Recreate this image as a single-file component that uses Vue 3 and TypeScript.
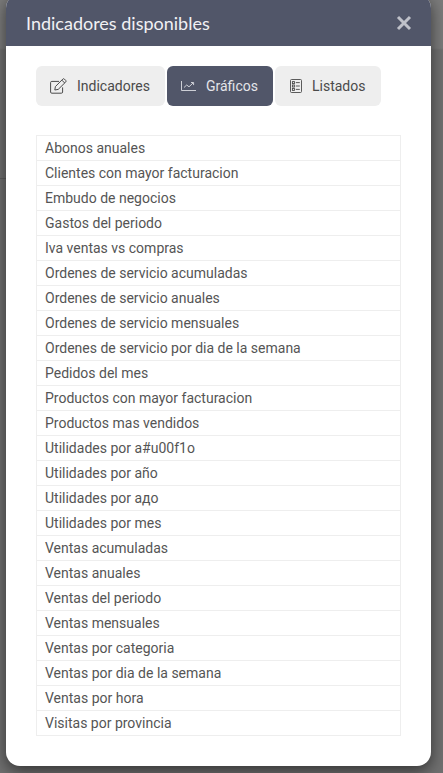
<script setup lang="ts">
const items: string[] = [
  'Abonos anuales',
  'Clientes con mayor facturacion',
  'Embudo de negocios',
  'Gastos del periodo',
  'Iva ventas vs compras',
  'Ordenes de servicio acumuladas',
  'Ordenes de servicio anuales',
  'Ordenes de servicio mensuales',
  'Ordenes de servicio por dia de la semana',
  'Pedidos del mes',
  'Productos con mayor facturacion',
  'Productos mas vendidos',
  'Utilidades por a#u00f1o',
  'Utilidades por año',
  'Utilidades por адо',
  'Utilidades por mes',
  'Ventas acumuladas',
  'Ventas anuales',
  'Ventas del periodo',
  'Ventas mensuales',
  'Ventas por categoria',
  'Ventas por dia de la semana',
  'Ventas por hora',
  'Visitas por provincia',
]
</script>

<template>
  <div class="backdrop">
    <div class="modal">
      <header class="head">
        <h1 class="title">Indicadores disponibles</h1>
        <svg class="close" viewBox="0 0 16 16" width="16" height="16" aria-hidden="true">
          <path d="M2 2 L14 14 M14 2 L2 14" fill="none" stroke="currentColor" stroke-width="3" />
        </svg>
      </header>
      <div class="body">
        <nav class="tabs">
          <button class="tab tab-a">
            <svg class="icon" viewBox="0 0 17 16" width="17" height="16" fill="none" stroke="currentColor" stroke-width="1" aria-hidden="true">
              <path d="M12.6 9.4 V14 a1.2 1.2 0 0 1 -1.2 1.2 H1.8 A1.2 1.2 0 0 1 .6 14 V4.6 A1.2 1.2 0 0 1 1.8 3.4 H9" />
              <path d="M5.4 8.6 L12.9 1 a1 1 0 0 1 1.4 0 L15.8 2.5 a1 1 0 0 1 0 1.4 L8.2 11.4 L4.8 12 Z" />
              <path d="M11.8 2.1 L14.7 5" />
            </svg>
            <span>Indicadores</span>
          </button>
          <button class="tab tab-b active">
            <svg class="icon" viewBox="0 0 15 10" width="15" height="10" fill="none" stroke="currentColor" stroke-width=".85" aria-hidden="true">
              <path d="M.5 0 V9.5 H15" />
              <path d="M3 6.5 L5.7 4 L8 5.8 L12 2" />
              <path d="M10 1.5 H12.6 V4.1" />
            </svg>
            <span>Gráficos</span>
          </button>
          <button class="tab tab-c">
            <svg class="icon" viewBox="0 0 12 14" width="12" height="14" fill="none" stroke="currentColor" stroke-width=".9" aria-hidden="true">
              <rect x=".5" y=".5" width="11" height="13" rx="1" />
              <rect x="2.4" y="2.6" width="2" height="2" />
              <rect x="2.4" y="6" width="2" height="2" />
              <rect x="2.4" y="9.4" width="2" height="2" />
              <path d="M5.8 3.6 H9.8 M5.8 7 H9.8 M5.8 10.4 H9.8" />
            </svg>
            <span>Listados</span>
          </button>
        </nav>
        <ul class="list">
          <li v-for="item in items" :key="item" class="row">{{ item }}</li>
        </ul>
      </div>
    </div>
  </div>
</template>

<style>
html, body { margin: 0; padding: 0; background: #6b6b6b; }
</style>

<style scoped>
.backdrop {
  width: 443px;
  height: 773px;
  overflow: hidden;
  background:
    linear-gradient(#5e5e5e, #5e5e5e) 0 178px / 6px 1px no-repeat,
    linear-gradient(#7b7b7b 0, #7b7b7b 48px, #707070 50px, #707070 100%);
  font-family: Roboto, sans-serif;
  box-sizing: border-box;
}
.modal {
  width: 425px;
  height: 772px;
  margin: -6px 0 0 6px;
  background: #fff;
  border-radius: 14px;
  overflow: hidden;
  box-shadow: 0 5px 16px rgba(0, 0, 0, 0.55);
}
.head {
  height: 52px;
  box-sizing: border-box;
  padding: 6px 19px 0 20px;
  background: #515669;
  display: flex;
  align-items: center;
  justify-content: space-between;
}
.title {
  margin: 0;
  font-family: Lato, sans-serif;
  font-size: 18px;
  font-weight: 400;
  color: #f1f1f4;
}
.close { color: #bfc1c9; }
.body { padding: 20px 30px 0; }
.tabs { display: flex; gap: 2px; }
.tab {
  height: 40px;
  border: 0;
  border-radius: 6px;
  background: #eeeeee;
  color: #4a4a4a;
  font-family: Roboto, sans-serif;
  font-size: 14px;
  display: flex;
  align-items: center;
  padding: 0;
}
.tab.active { background: #515669; color: #e4e5ea; }
.tab-a { width: 129px; padding-left: 14px; gap: 10px; }
.tab-b { width: 106px; padding-left: 14px; gap: 10px; }
.tab-c { width: 106px; padding-left: 15px; gap: 10px; }
.icon { flex: none; }
.list {
  list-style: none;
  margin: 29px 0 0;
  padding: 0;
  border: 1px solid #eeeeee;
  border-bottom: 0;
}
.row {
  height: 25px;
  box-sizing: border-box;
  border-bottom: 1px solid #eeeeee;
  padding-left: 8px;
  font-size: 14px;
  line-height: 24px;
  color: #555;
}
</style>
